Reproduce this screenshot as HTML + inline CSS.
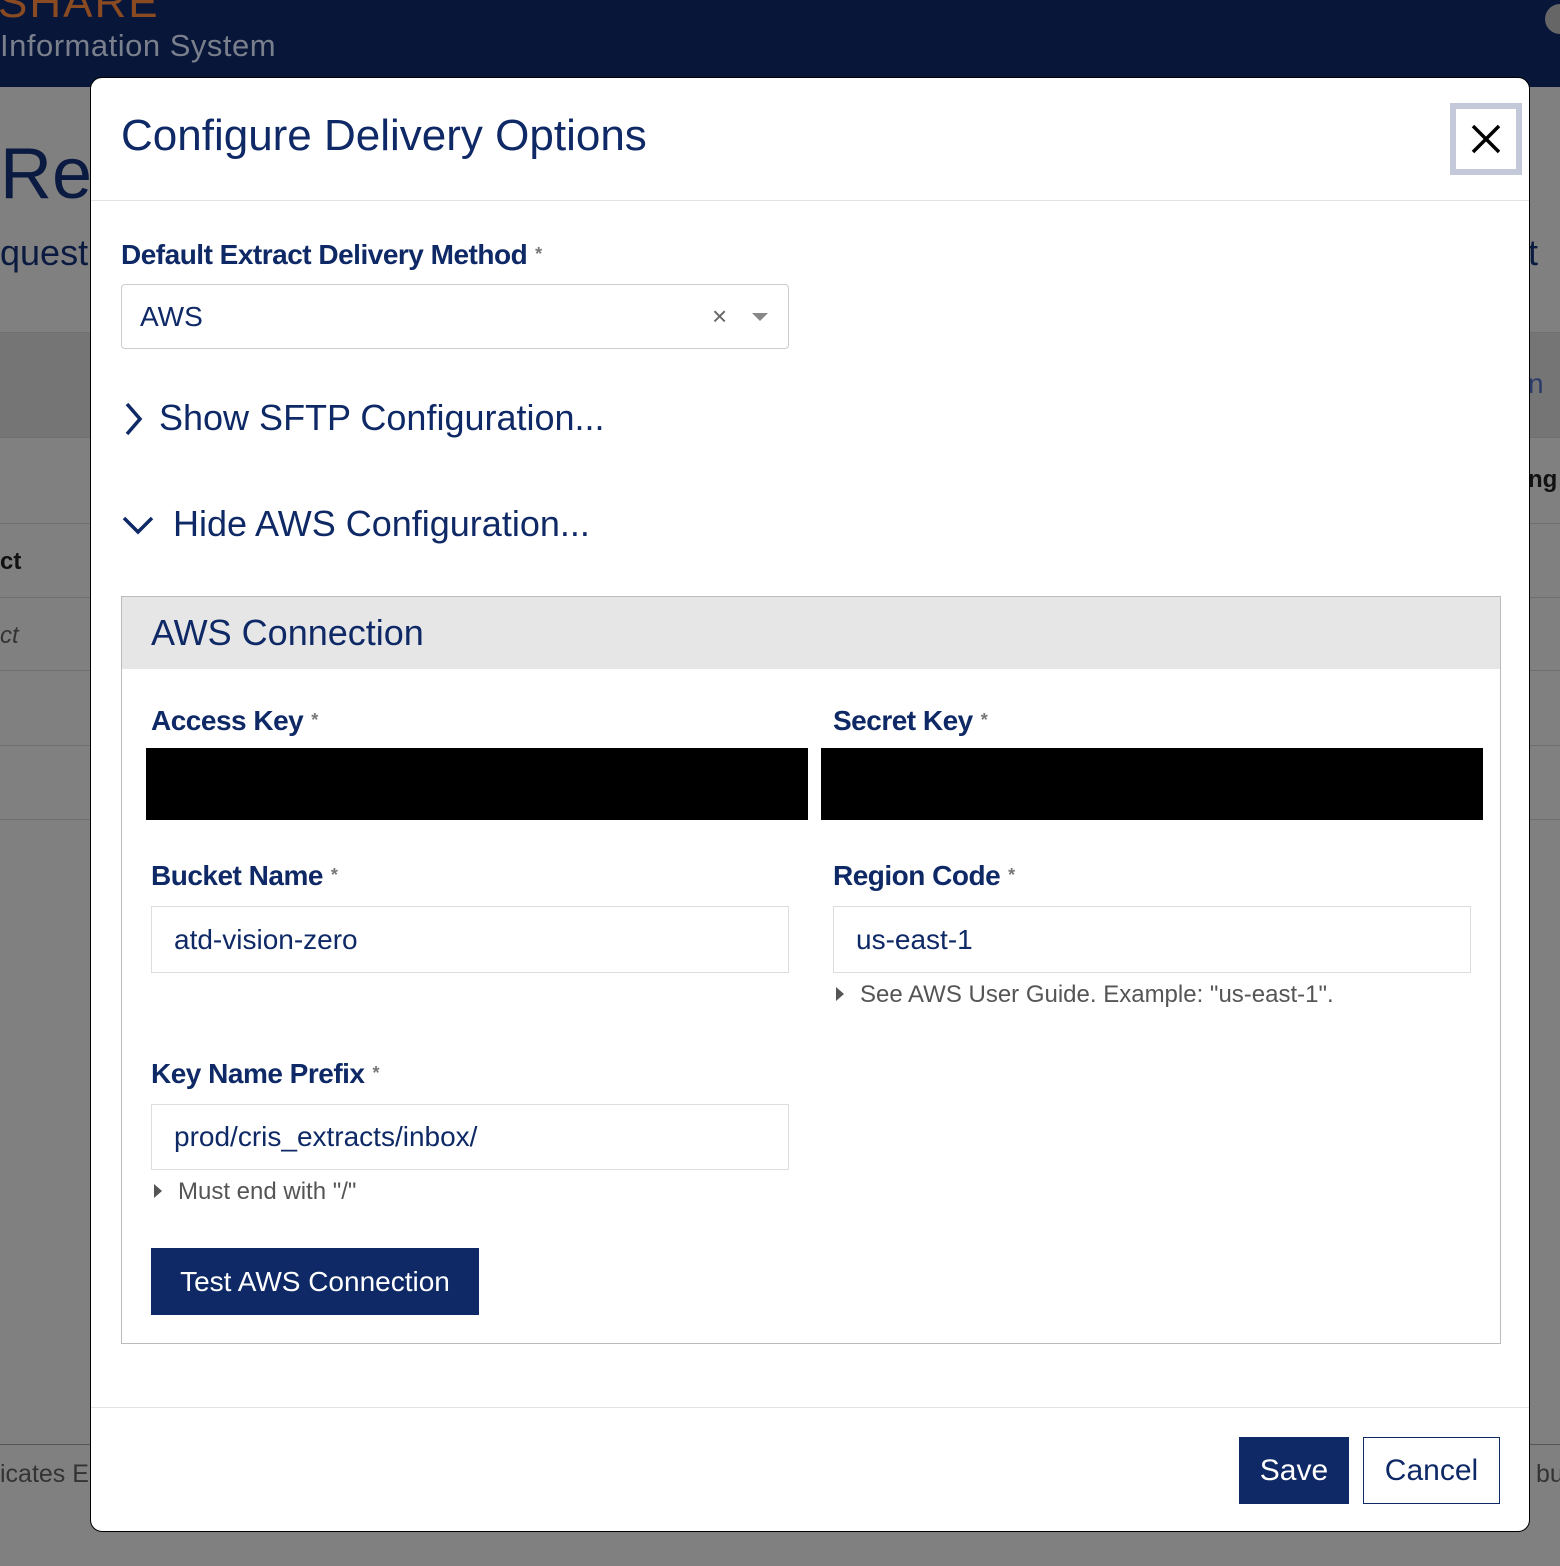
<!DOCTYPE html>
<html><head><meta charset="utf-8"><style>
*{box-sizing:border-box;margin:0;padding:0}
body{width:1560px;height:1566px;position:relative;overflow:hidden;background:#808080;font-family:"Liberation Sans",sans-serif;color:#0e2966}
.a{position:absolute}
.hdr{left:0;top:0;width:1560px;height:87px;background:#08163a}
.line{left:0;width:1560px;height:1px;background:#6f6f6f}
.modal{left:90px;top:77px;width:1440px;height:1455px;background:#fff;border:1px solid #000;border-radius:12px}
.lbl{font-weight:bold;font-size:28px;letter-spacing:-0.5px;white-space:nowrap}
.lbl span{color:#777;font-size:18px;vertical-align:4px;margin-left:8px}
.inp{border:1px solid #ddd;background:#fff;font-size:28px;color:#0e2966;padding-left:22px;display:flex;align-items:center}
.help{font-size:24px;color:#555;white-space:nowrap}
.help:before{content:"";display:inline-block;border-left:8px solid #555;border-top:7px solid transparent;border-bottom:7px solid transparent;margin-right:16px;vertical-align:1px}
</style></head><body>
<div class="a hdr"></div>
<div class="a" style="left:-2px;top:-22px;font-size:44px;color:#8a4a22;letter-spacing:2px">SHARE</div>
<div class="a" style="left:0;top:28px;font-size:31px;color:#7a7f8c;letter-spacing:0.5px">Information System</div>
<div class="a" style="left:0;top:133px;font-size:72px;color:#0a1a40">Re</div>
<div class="a" style="left:0;top:232px;font-size:36px;color:#0a1a40">quest</div>
<div class="a" style="left:1528px;top:232px;font-size:36px;color:#0a1a40">t</div>
<div class="a line" style="top:332px"></div>
<div class="a" style="left:0;top:333px;width:1560px;height:104px;background:#757575"></div>
<div class="a line" style="top:437px"></div>
<div class="a" style="left:1528px;top:368px;font-size:28px;color:#2a3b6a">n</div>
<div class="a" style="left:1528px;top:466px;font-size:24px;font-weight:bold;color:#111">ng</div>
<div class="a line" style="top:523px"></div>
<div class="a" style="left:0;top:548px;font-size:24px;font-weight:bold;color:#111">ct</div>
<div class="a line" style="top:597px"></div>
<div class="a" style="left:0;top:622px;font-size:24px;font-style:italic;color:#333">ct</div>
<div class="a line" style="top:670px"></div>
<div class="a line" style="top:745px"></div>
<div class="a line" style="top:819px"></div>
<div class="a line" style="top:1444px;background:#555"></div>
<div class="a" style="left:0;top:1460px;font-size:25px;color:#333">icates E</div>
<div class="a" style="left:1536px;top:1460px;font-size:25px;color:#333">bu</div>
<div class="a" style="left:1545px;top:4px;width:30px;height:30px;border-radius:50%;background:#666"></div>

<div class="a modal">
 <div class="a" style="left:30px;top:33px;font-size:44px;letter-spacing:0px;white-space:nowrap">Configure Delivery Options</div>
 <div class="a" style="left:1359px;top:25px;width:72px;height:72px;border:6px solid #c3c9d8;background:#fff">
  <svg width="60" height="60" viewBox="0 0 60 60"><path d="M17 17L43 43M43 17L17 43" stroke="#000" stroke-width="3.5"/></svg>
 </div>
 <div class="a" style="left:0;top:122px;width:1438px;height:1px;background:#e2e2e2"></div>

 <div class="a lbl" style="left:30px;top:161px">Default Extract Delivery Method<span>*</span></div>
 <div class="a inp" style="left:30px;top:206px;width:668px;height:65px;border-color:#ccc;border-radius:4px;padding-left:18px">AWS</div>
 <div class="a" style="left:621px;top:223px;font-size:26px;color:#666">×</div>
 <div class="a" style="left:661px;top:235px;border-top:8px solid #888;border-left:8px solid transparent;border-right:8px solid transparent"></div>

 <svg class="a" style="left:31px;top:323px" width="24" height="36" viewBox="0 0 24 36"><path d="M5 3L18 18L5 33" fill="none" stroke="#0e2966" stroke-width="3.5"/></svg>
 <div class="a" style="left:68px;top:319px;font-size:36px;white-space:nowrap">Show SFTP Configuration...</div>
 <svg class="a" style="left:30px;top:435px" width="36" height="24" viewBox="0 0 36 24"><path d="M3 5L17 19L31 5" fill="none" stroke="#0e2966" stroke-width="3.5"/></svg>
 <div class="a" style="left:82px;top:425px;font-size:36px;white-space:nowrap">Hide AWS Configuration...</div>

 <div class="a" style="left:30px;top:518px;width:1380px;height:748px;border:1px solid #bbb">
  <div class="a" style="left:0;top:0;width:1378px;height:72px;background:#e6e6e6"></div>
  <div class="a" style="left:29px;top:15px;font-size:36px;white-space:nowrap">AWS Connection</div>
  <div class="a lbl" style="left:29px;top:108px">Access Key<span>*</span></div>
  <div class="a lbl" style="left:711px;top:108px">Secret Key<span>*</span></div>
  <div class="a" style="left:24px;top:151px;width:662px;height:72px;background:#000"></div>
  <div class="a" style="left:699px;top:151px;width:662px;height:72px;background:#000"></div>
  <div class="a lbl" style="left:29px;top:263px">Bucket Name<span>*</span></div>
  <div class="a lbl" style="left:711px;top:263px">Region Code<span>*</span></div>
  <div class="a inp" style="left:29px;top:309px;width:638px;height:67px">atd-vision-zero</div>
  <div class="a inp" style="left:711px;top:309px;width:638px;height:67px">us-east-1</div>
  <div class="a help" style="left:714px;top:384px">See AWS User Guide. Example: "us-east-1".</div>
  <div class="a lbl" style="left:29px;top:461px">Key Name Prefix<span>*</span></div>
  <div class="a inp" style="left:29px;top:507px;width:638px;height:66px">prod/cris_extracts/inbox/</div>
  <div class="a help" style="left:32px;top:581px">Must end with "/"</div>
  <div class="a" style="left:29px;top:651px;width:328px;height:67px;background:#0e2966;color:#fff;font-size:28px;display:flex;align-items:center;justify-content:center">Test AWS Connection</div>
 </div>

 <div class="a" style="left:0;top:1329px;width:1438px;height:1px;background:#e2e2e2"></div>
 <div class="a" style="left:1148px;top:1359px;width:110px;height:67px;background:#0e2966;color:#fff;font-size:30px;display:flex;align-items:center;justify-content:center">Save</div>
 <div class="a" style="left:1272px;top:1359px;width:137px;height:67px;border:1px solid #0e2966;font-size:30px;display:flex;align-items:center;justify-content:center">Cancel</div>
</div>
</body></html>
